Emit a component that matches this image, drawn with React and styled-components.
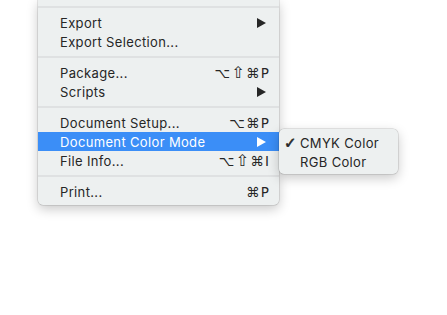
import React from "react";
import styled, { createGlobalStyle } from "styled-components";

const Global = createGlobalStyle`
  html, body { margin: 0; padding: 0; background: #ffffff; }
  body { font-family: Inter, "Noto Sans", "DejaVu Sans", sans-serif; -webkit-font-smoothing: antialiased; }
`;

const Page = styled.div`
  width: 447px;
  height: 315px;
  padding-left: 38px;
  box-sizing: border-box;
  display: flex;
  align-items: flex-start;
  overflow: hidden;
`;

const Menu = styled.div`
  width: 241px;
  box-sizing: border-box;
  background: #edf0f0;
  border-radius: ${(p) => (p.$top ? "5px" : "0 0 5px 5px")};
  padding: ${(p) => (p.$top ? "4px 0 3px" : "1px 0 4px")};
  margin-top: ${(p) => p.$offset || 0}px;
  box-shadow: 0 0 0 0.5px rgba(0, 0, 0, 0.18), 0 4px 12px rgba(0, 0, 0, 0.22);
  position: relative;
  z-index: ${(p) => (p.$top ? 2 : 1)};
  ${(p) => p.$width && `width: ${p.$width}px;`}
`;

const Separator = styled.div`
  height: 12px;
  display: flex;
  align-items: center;
  &::after {
    content: "";
    flex: 1;
    height: 2px;
    background: #dfe1e2;
  }
`;

const Row = styled.div`
  height: 19px;
  display: flex;
  align-items: center;
  padding: 0 ${(p) => p.$pr ?? 10}px 0 ${(p) => p.$pl ?? 22}px;
  font-size: 13px;
  letter-spacing: 0.35px;
  color: ${(p) => (p.$active ? "#ffffff" : "#262626")};
  background: ${(p) => (p.$active ? "#3b8ef7" : "transparent")};
  white-space: nowrap;
`;

const Label = styled.span`
  flex: 1;
`;

const Check = styled.span`
  width: 15px;
  margin-left: -16px;
  margin-right: 1px;
  font-size: 15px;
  font-family: "DejaVu Sans", sans-serif;
  -webkit-text-stroke: 0.6px currentColor;
`;

const Shortcut = styled.span`
  font-family: "DejaVu Sans", sans-serif;
  font-size: 13.5px;
  letter-spacing: 1.3px;
  margin-right: -1.3px;
`;

const Shift = styled.span`
  font-size: 16px;
  line-height: 1;
`;

const Arrow = styled.svg`
  width: 9px;
  height: 10px;
  margin-right: 3px;
  fill: ${(p) => (p.$active ? "#ffffff" : "#262626")};
`;

const SubArrow = ({ active }) => (
  <Arrow viewBox="0 0 9 10" $active={active}>
    <path d="M0 0 L9 5 L0 10 Z" />
  </Arrow>
);

const Keys = ({ keys }) => (
  <Shortcut>
    {keys.split(/(⇧)/).map((part, i) =>
      part === "⇧" ? <Shift key={i}>⇧</Shift> : <React.Fragment key={i}>{part}</React.Fragment>
    )}
  </Shortcut>
);

const groups = [
  [
    { label: "Export", sub: true },
    { label: "Export Selection..." },
  ],
  [
    { label: "Package...", key: "⌥⇧⌘P" },
    { label: "Scripts", sub: true },
  ],
  [
    { label: "Document Setup...", key: "⌥⌘P" },
    { label: "Document Color Mode", sub: true, active: true },
    { label: "File Info...", key: "⌥⇧⌘I" },
  ],
  [{ label: "Print...", key: "⌘P" }],
];

export default function App() {
  return (
    <>
      <Global />
      <Page>
        <Menu>
          {groups.map((g, gi) => (
            <React.Fragment key={gi}>
              <Separator />
              {g.map((it) => (
                <Row key={it.label} $active={it.active}>
                  <Label>{it.label}</Label>
                  {it.key && <Keys keys={it.key} />}
                  {it.sub && <SubArrow active={it.active} />}
                </Row>
              ))}
            </React.Fragment>
          ))}
        </Menu>
        <Menu $top $offset={129} $width={119}>
          <Row $pl={21}>
            <Check>✓</Check>
            <Label>CMYK Color</Label>
          </Row>
          <Row $pl={21}>
            <Label>RGB Color</Label>
          </Row>
        </Menu>
      </Page>
    </>
  );
}
